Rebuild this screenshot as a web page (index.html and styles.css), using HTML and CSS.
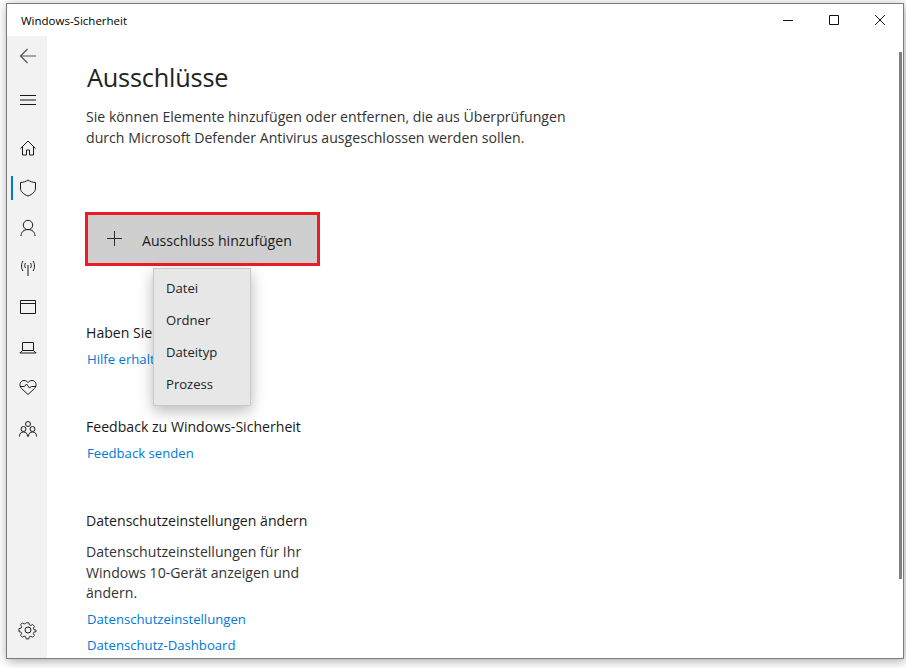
FILE: index.html
```html
<!DOCTYPE html>
<html lang="de">
<head>
<meta charset="utf-8">
<title>Windows-Sicherheit</title>
<link rel="stylesheet" href="styles.css">
</head>
<body>
<div class="window">
  <header class="titlebar">
    <span class="app-title">Windows-Sicherheit</span>
    <div class="controls">
      <svg class="ctl" viewBox="0 0 46 32"><path d="M18 16.500h10"/></svg>
      <svg class="ctl" viewBox="0 0 46 32"><path d="M18.500 11.500h9v9h-9z"/></svg>
      <svg class="ctl" viewBox="0 0 46 32"><path d="M18 11l10 10M28 11l-10 10"/></svg>
    </div>
  </header>
  <div class="content">
    <nav class="sidebar">
      <div class="nav-item nav-back"><svg viewBox="0 0 20 20" class="ico back"><path d="M18 10H2.500M9.500 3l-7 7 7 7"/></svg></div>
      <div class="nav-item nav-menu"><svg viewBox="0 0 20 20" class="ico"><path d="M2 5.500h16M2 10h16M2 14.500h16"/></svg></div>
      <div class="nav-item nav-home"><svg viewBox="0 0 20 20" class="ico"><path d="M2.500 10.500L10 3l7.500 7.500M4.500 8.500v8.500h4v-5h3v5h4V8.500"/></svg></div>
      <div class="nav-item active"><svg viewBox="0 0 20 20" class="ico"><path d="M10 2c2 1.600 4.700 2.400 7.500 2.500v5.500c0 3.800-3 6.300-7.500 8-4.500-1.700-7.500-4.200-7.500-8V4.500C5.300 4.400 8 3.600 10 2z"/></svg></div>
      <div class="nav-item"><svg viewBox="0 0 20 20" class="ico"><circle cx="10" cy="7" r="4.700"/><path d="M3 18c0-4 3-6.500 7-6.500s7 2.500 7 6.500"/></svg></div>
      <div class="nav-item"><svg viewBox="0 0 20 20" class="ico"><path d="M10 7v11M7.500 5c-1 1.500-1 3.500 0 5M12.500 5c1 1.500 1 3.500 0 5M5 3c-2 3-2 7 0 10M15 3c2 3 2 7 0 10"/></svg></div>
      <div class="nav-item"><svg viewBox="0 0 20 20" class="ico"><path d="M2.500 3.500h15v13h-15zM2.500 6.500h15"/></svg></div>
      <div class="nav-item"><svg viewBox="0 0 20 20" class="ico"><path d="M4.500 5.500h11v8h-11zM4.500 13.500l-2 2h-.5v.5h16v-.5h-.5l-2-2"/></svg></div>
      <div class="nav-item"><svg viewBox="0 0 20 20" class="ico"><path d="M10 17.500L3.500 11.500C.5 8.500 2 3.500 6 3.500c2 0 3 1 4 2 1-1 2-2 4-2 4 0 5.500 5 2.500 8zM2 9.500h4.500l2-2.500 3 4 2-1.500H18"/></svg></div>
      <div class="nav-item nav-family"><svg viewBox="0 0 20 20" class="ico"><circle cx="10" cy="5" r="2.500"/><circle cx="5.500" cy="10" r="2.500"/><circle cx="14.500" cy="10" r="2.500"/><path d="M1.500 17.500c0-3 1.500-4.500 4-4.500s4 1.500 4 4.500M10.500 17.500c0-3 1.500-4.500 4-4.500s4 1.500 4 4.500"/></svg></div>
      <div class="nav-item nav-settings"><svg viewBox="0 0 20 20" class="ico"><circle cx="10" cy="10" r="3"/><path d="M8.500 2.500h3l.5 2.300 1.700.8 2-1.200 2 2.100-1.200 2 .7 1.700 2.300.5v1.600l-2.300.6-.7 1.700 1.200 2-2 2-2-1.200-1.700.7-.5 2.300h-3l-.5-2.300-1.700-.7-2 1.200-2-2 1.200-2-.7-1.700-2.300-.6V9l2.300-.5.7-1.700-1.200-2 2-2.100 2 1.200 1.700-.8z" transform="translate(.500 .500) scale(.9)"/></svg></div>
    </nav>
    <main class="main">
      <h1 class="page-title">Ausschlüsse</h1>
      <p class="intro">Sie können Elemente hinzufügen oder entfernen, die aus Überprüfungen durch Microsoft Defender Antivirus ausgeschlossen werden sollen.</p>
      <div class="add-wrap">
        <button class="add-btn"><svg viewBox="0 0 16 16" class="plus"><path d="M8 0v16M0 8h16"/></svg><span class="add-label">Ausschluss hinzufügen</span></button>
        <ul class="flyout">
          <li>Datei</li>
          <li>Ordner</li>
          <li>Dateityp</li>
          <li>Prozess</li>
        </ul>
      </div>
      <section class="block help">
        <h2>Haben Sie eine Frage?</h2>
        <a class="link">Hilfe erhalten</a>
      </section>
      <section class="block feedback">
        <h2>Feedback zu Windows-Sicherheit</h2>
        <a class="link">Feedback senden</a>
      </section>
      <section class="block privacy">
        <h2>Datenschutzeinstellungen ändern</h2>
        <p class="privacy-text">Datenschutzeinstellungen für Ihr Windows 10-Gerät anzeigen und ändern.</p>
        <a class="link">Datenschutzeinstellungen</a>
        <a class="link">Datenschutz-Dashboard</a>
      </section>
    </main>
    <div class="scrolltrack"><div class="thumb"></div></div>
  </div>
</div>
</body>
</html>
```
FILE: styles.css
```css
html, body { margin: 0; padding: 0; background: #fff; }
body { width: 906px; height: 668px; overflow: hidden; font-family: "Open Sans", "Noto Sans", sans-serif; color: #1a1a1a; }
.window { box-sizing: border-box; width: 898px; height: 656px; margin: 3px 0 0 6px; background: #fff; border: 1px solid #7b7b7b; box-shadow: 1px 2px 10px rgba(0,0,0,.35); display: flex; flex-direction: column; overflow: hidden; }
.titlebar { height: 32px; flex: none; display: flex; justify-content: space-between; align-items: center; }
.app-title { font-size: 11.500px; margin-left: 14px; color: #000; }
.controls { display: flex; }
.ctl { width: 46px; height: 32px; fill: none; stroke: #111; stroke-width: 1; }
.content { flex: 1; display: flex; min-height: 0; position: relative; }
.sidebar { width: 40px; flex: none; background: #f2f2f2; display: flex; flex-direction: column; }
.nav-item { box-sizing: border-box; height: 39.750px; flex: none; padding-left: 2px; display: flex; align-items: center; justify-content: center; position: relative; }
.nav-menu { margin-top: 4px; }
.nav-home { margin-top: 9px; }
.nav-family { margin-top: 2px; }
.nav-settings { margin-top: auto; margin-bottom: 8px; }
.ico { width: 20px; height: 20px; fill: none; stroke: #1a1a1a; stroke-width: 1; }
.back { stroke: #555; stroke-width: 1.200; }
.active::before { content: ""; position: absolute; left: 4px; top: 8px; width: 2px; height: 24px; background: #0078d4; }
.main { flex: 1; min-width: 0; padding: 0 0 0 39px; overflow: hidden; }
.page-title { margin: 24px 0 0 1px; font-size: 25.300px; line-height: 34px; font-weight: 400; color: #222; letter-spacing: -.2px; }
.intro { width: 490px; margin: 12px 0 0; font-size: 14.130px; line-height: 21px; color: #333; }
.add-wrap { position: relative; margin-top: 64px; }
.add-btn { box-sizing: border-box; width: 235px; height: 54px; margin: 0 0 0 -1px; padding: 0 0 0 19px; display: flex; align-items: center; background: #cfcfcf; border: 3px solid #ed1c24; font: inherit; font-size: 14.150px; color: #1a1a1a; }
.add-label { padding-top: 2px; }
.plus { width: 15px; height: 15px; fill: none; stroke: #222; stroke-width: 1; margin: 0 20px 2px 0; }
.flyout { position: absolute; z-index: 2; left: 67px; top: 56px; box-sizing: border-box; width: 98px; height: 138px; margin: 0; padding: 4px 0; list-style: none; background: #e7e7e7; border: 1px solid #c8c8c8; box-shadow: 0 5px 14px rgba(0,0,0,.28); }
.flyout li { height: 32px; line-height: 31px; padding-left: 12px; font-size: 13.100px; color: #222; }
.block h2 { margin: 0; font-size: 14.100px; line-height: 20px; font-weight: 400; color: #1a1a1a; }
.help { margin-top: 57px; }
.feedback { margin-top: 48px; }
.privacy { margin-top: 48px; }
.link { display: block; margin: 6px 0 0 1px; font-size: 13.150px; line-height: 20px; color: #0078d7; }
.privacy-text { width: 240px; margin: 11px 0 0; font-size: 14.100px; line-height: 20.500px; color: #333; }
.privacy .link { margin-top: 6px; }
.privacy-text + .link { margin-top: 5px; }
.scrolltrack { position: absolute; right: 1px; top: 16px; width: 3px; height: 527px; }
.thumb { width: 100%; height: 100%; background: #808080; }
```
